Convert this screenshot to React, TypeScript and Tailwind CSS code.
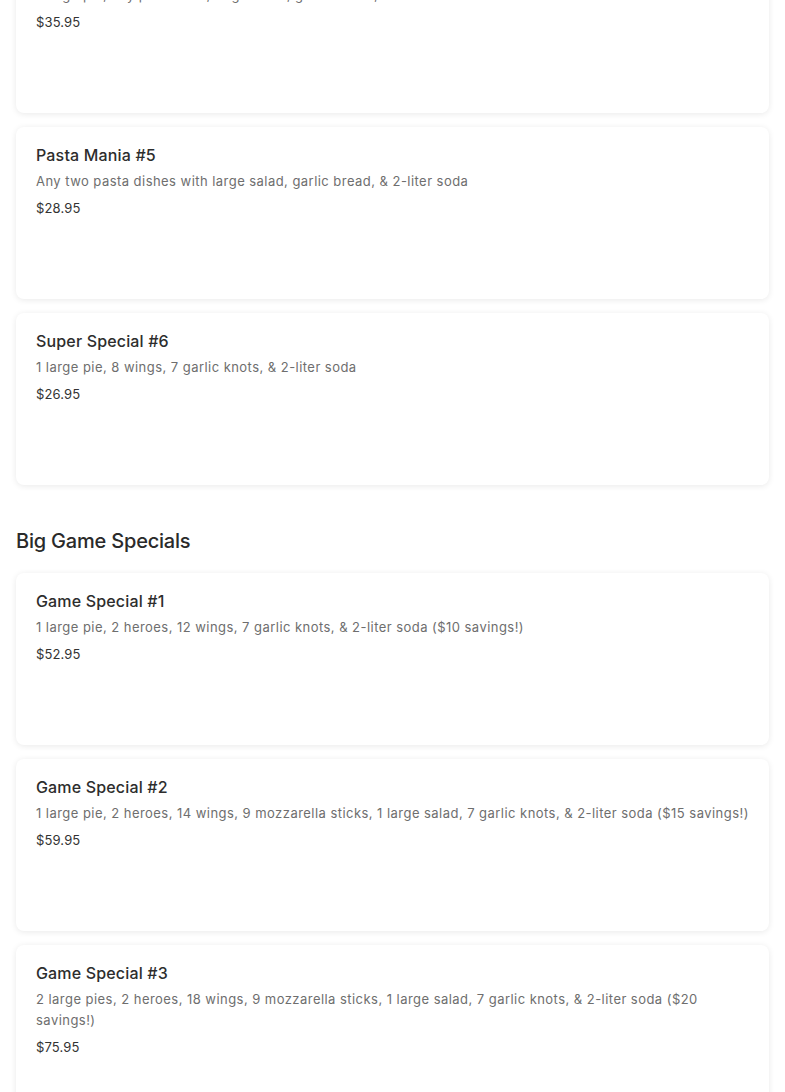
import React from 'react';

interface Item {
  name: string;
  description: string;
  price: string;
}

const specials: Item[] = [
  { name: "Pasta Mania #4", description: "1 large pie, any pasta dish, large salad, garlic bread, & 2-liter soda", price: "$35.95" },
  { name: "Pasta Mania #5", description: "Any two pasta dishes with large salad, garlic bread, & 2-liter soda", price: "$28.95" },
  { name: "Super Special #6", description: "1 large pie, 8 wings, 7 garlic knots, & 2-liter soda", price: "$26.95" },
];

const gameSpecials: Item[] = [
  { name: "Game Special #1", description: "1 large pie, 2 heroes, 12 wings, 7 garlic knots, & 2-liter soda ($10 savings!)", price: "$52.95" },
  { name: "Game Special #2", description: "1 large pie, 2 heroes, 14 wings, 9 mozzarella sticks, 1 large salad, 7 garlic knots, & 2-liter soda ($15 savings!)", price: "$59.95" },
  { name: "Game Special #3", description: "2 large pies, 2 heroes, 18 wings, 9 mozzarella sticks, 1 large salad, 7 garlic knots, & 2-liter soda ($20 savings!)", price: "$75.95" },
];

const MenuCard = ({ item }: { item: Item }) => (
  <div className="min-h-[172px] rounded-lg bg-white px-5 pt-4 pb-5 shadow-[0_1px_6px_rgba(0,0,0,0.09)]">
    <h3 className="text-[16px] leading-6 font-medium text-[#2d2d2d] tracking-[0.01em]">{item.name}</h3>
    <p className="mt-1 text-[13px] leading-[21px] text-[#6e6e6e] tracking-[0.035em]">{item.description}</p>
    <p className="mt-[6px] text-[13px] leading-[21px] text-[#333333] tracking-[0.01em]">{item.price}</p>
  </div>
);

export default function App() {
  return (
    <div className="h-[1092px] overflow-hidden bg-white" style={{ fontFamily: 'Inter, "Open Sans", sans-serif' }}>
      <div className="-mt-[59px] px-4">
        <div className="flex flex-col gap-[14px]">
          {specials.map((item) => (
            <MenuCard key={item.name} item={item} />
          ))}
        </div>

        <h2 className="mt-[42px] mb-[18px] text-[20px] leading-7 font-medium text-[#2a2a2a] tracking-[-0.01em]">Big Game Specials</h2>

        <div className="flex flex-col gap-[14px]">
          {gameSpecials.map((item) => (
            <MenuCard key={item.name} item={item} />
          ))}
        </div>
      </div>
    </div>
  );
}
